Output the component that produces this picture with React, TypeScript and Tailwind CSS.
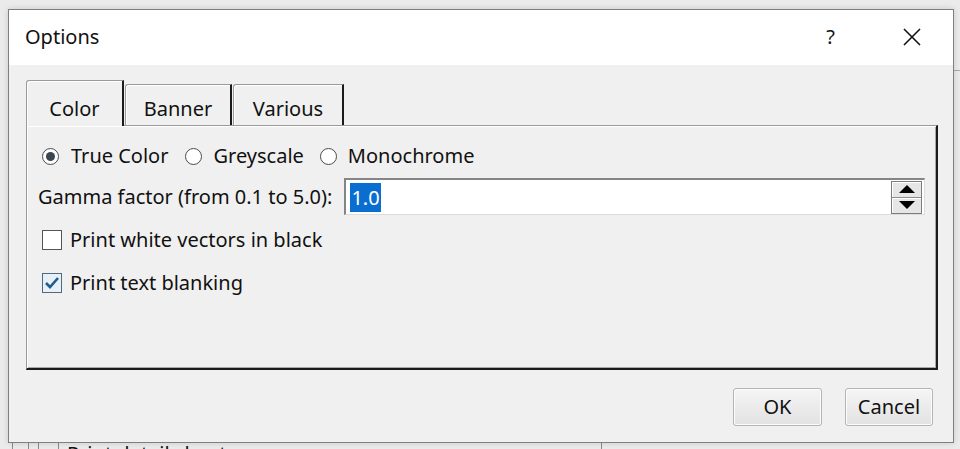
export default function App() {
  const font = { fontFamily: '"Noto Sans", "Open Sans", sans-serif' };
  return (
    <div className="relative w-[960px] h-[449px] overflow-hidden bg-[#ebebeb] text-[20px] text-[#111]" style={font}>
      {/* underlying window content peeking out */}
      <div className="absolute left-0 top-[436px] w-full h-[20px] flex items-start">
        <div className="w-[12px] h-full" />
        <div className="w-px h-full bg-[#8a8a8a]" />
        <div className="w-[15px] h-full" />
        <div className="w-px h-full bg-[#8a8a8a]" />
        <div className="w-[9px] h-full" />
        <div className="w-px h-full bg-[#8a8a8a]" />
        <div className="w-[19px] h-full" />
        <div className="w-px h-full bg-[#8a8a8a]" />
        <div className="pl-[8px] leading-[24px] pt-[6px] whitespace-nowrap">Print detail sheet</div>
        <div className="ml-[374px] w-px h-full bg-[#8a8a8a]" />
      </div>
      <div className="absolute right-0 top-[70px] w-[7px] h-px bg-[#a8a8a8]" />

      {/* dialog window */}
      <div className="absolute left-[8px] top-[9px] w-[946px] h-[434px] border border-[#7f7f7f] bg-[#f0f0f0] shadow-[0_0_6px_rgba(0,0,0,0.15)] flex flex-col">
        {/* title bar */}
        <div className="h-[55px] bg-white flex items-center pl-[16px] pr-[32px]">
          <div className="flex-1 leading-[24px] pb-[2px]">Options</div>
          <div className="leading-[24px] pb-[2px] text-[20px]">?</div>
          <div className="ml-[68px] w-[18px] h-[18px] mb-[2px]">
            <svg width="18" height="18" viewBox="0 0 18 18">
              <path d="M1 1 L17 17 M17 1 L1 17" stroke="#111" strokeWidth="1.6" fill="none" />
            </svg>
          </div>
        </div>

        {/* body */}
        <div className="flex flex-col pl-[17px] pr-[15px] pt-[15px]">
          {/* tabs */}
          <div className="flex items-end h-[45px]">
            <div className="relative z-10 -mb-px w-[98px] h-[46px] bg-[#f0f0f0] border-l border-t border-[#9a9a9a] border-r-2 border-r-[#1a1a1a] rounded-tl-[3px] shadow-[inset_1px_1px_0_#ffffff] flex items-end justify-center pb-[5px] leading-[24px]">
              Color
            </div>
            <div className="ml-[1px] w-[107px] h-[41px] bg-[#f0f0f0] border-l border-t border-[#9a9a9a] border-r-2 border-r-[#1a1a1a] rounded-tl-[3px] shadow-[inset_1px_1px_0_#ffffff] flex items-end justify-center pb-[4px] leading-[24px]">
              Banner
            </div>
            <div className="ml-[1px] w-[111px] h-[41px] bg-[#f0f0f0] border-l border-t border-[#9a9a9a] border-r-2 border-r-[#1a1a1a] rounded-tl-[3px] shadow-[inset_1px_1px_0_#ffffff] flex items-end justify-center pb-[4px] leading-[24px]">
              Various
            </div>
          </div>

          {/* panel */}
          <div className="h-[245px] border-t border-l border-[#9a9a9a] border-r-2 border-b-2 border-r-[#1a1a1a] border-b-[#1a1a1a] shadow-[inset_1px_1px_0_#ffffff,inset_-1px_-1px_0_#a8a8a8] bg-[#f0f0f0] flex flex-col">
            {/* radio row */}
            <div className="flex items-center h-[24px] mt-[18px] pl-[15px] leading-[24px]">
              <Radio checked />
              <span className="ml-[12px]">True Color</span>
              <span className="ml-[17px]"><Radio /></span>
              <span className="ml-[11px]">Greyscale</span>
              <span className="ml-[16px]"><Radio /></span>
              <span className="ml-[11px]">Monochrome</span>
            </div>

            {/* gamma row */}
            <div className="flex items-center mt-[10px] pl-[11px] pr-[11px]">
              <span className="leading-[24px] whitespace-nowrap">Gamma factor (from 0.1 to 5.0):</span>
              <div className="ml-[12px] flex-1 h-[37px] bg-white border-t-2 border-l-2 border-t-[#858585] border-l-[#858585] border-r border-b border-r-[#dcdcdc] border-b-[#dcdcdc] flex items-center">
                <div className="flex-1 pl-[4px] flex items-center">
                  <span className="bg-[#0a6ed1] text-white leading-[29px] px-[1px]">1.0</span>
                </div>
                <div className="w-[31px] h-[33px] mr-[2px] border border-[#7c7c7c] bg-[#8c8c8c] flex flex-col gap-[1px]">
                  <div className="flex-1 bg-[#e6e6e6] flex items-center justify-center shadow-[inset_1px_1px_0_#ffffff]">
                    <svg width="16" height="8" viewBox="0 0 16 8"><path d="M8 0 L16 8 L0 8 Z" fill="#000" /></svg>
                  </div>
                  <div className="flex-1 bg-[#e6e6e6] flex items-center justify-center shadow-[inset_1px_1px_0_#ffffff]">
                    <svg width="16" height="8" viewBox="0 0 16 8"><path d="M0 0 L16 0 L8 8 Z" fill="#000" /></svg>
                  </div>
                </div>
              </div>
            </div>

            {/* checkbox rows */}
            <div className="flex items-center mt-[13px] pl-[15px] h-[24px] leading-[24px]">
              <Check />
              <span className="ml-[8px]">Print white vectors in black</span>
            </div>
            <div className="flex items-center mt-[19px] pl-[15px] h-[24px] leading-[24px]">
              <Check checked />
              <span className="ml-[8px]">Print text blanking</span>
            </div>
          </div>
        </div>

        {/* buttons */}
        <div className="flex justify-end gap-[23px] pr-[20px] mt-[18px]">
          <button className="w-[89px] h-[38px] rounded-[3px] border border-[#b4b4b4] bg-gradient-to-b from-[#f5f5f5] to-[#e2e2e2] leading-[24px] text-[#111] shadow-[inset_0_0_0_1px_#fcfcfc]">
            OK
          </button>
          <button className="w-[88px] h-[38px] rounded-[3px] border border-[#b4b4b4] bg-gradient-to-b from-[#f5f5f5] to-[#e2e2e2] leading-[24px] text-[#111] shadow-[inset_0_0_0_1px_#fcfcfc]">
            Cancel
          </button>
        </div>
      </div>
    </div>
  );
}

function Radio({ checked = false }: { checked?: boolean }) {
  return (
    <div className="w-[17px] h-[17px] rounded-full border border-[#4a4a4a] bg-white flex items-center justify-center">
      {checked && <div className="w-[9px] h-[9px] rounded-full bg-[#3a4650]" />}
    </div>
  );
}

function Check({ checked = false }: { checked?: boolean }) {
  return (
    <div className={`w-[20px] h-[20px] border ${checked ? 'border-[#4f6b82] bg-[#e8f0f7]' : 'border-[#555] bg-white'} flex items-center justify-center`}>
      {checked && (
        <svg width="16" height="16" viewBox="0 0 16 16">
          <path d="M2 8 L6 12 L14 3" stroke="#1f5d8e" strokeWidth="2.6" fill="none" />
        </svg>
      )}
    </div>
  );
}
